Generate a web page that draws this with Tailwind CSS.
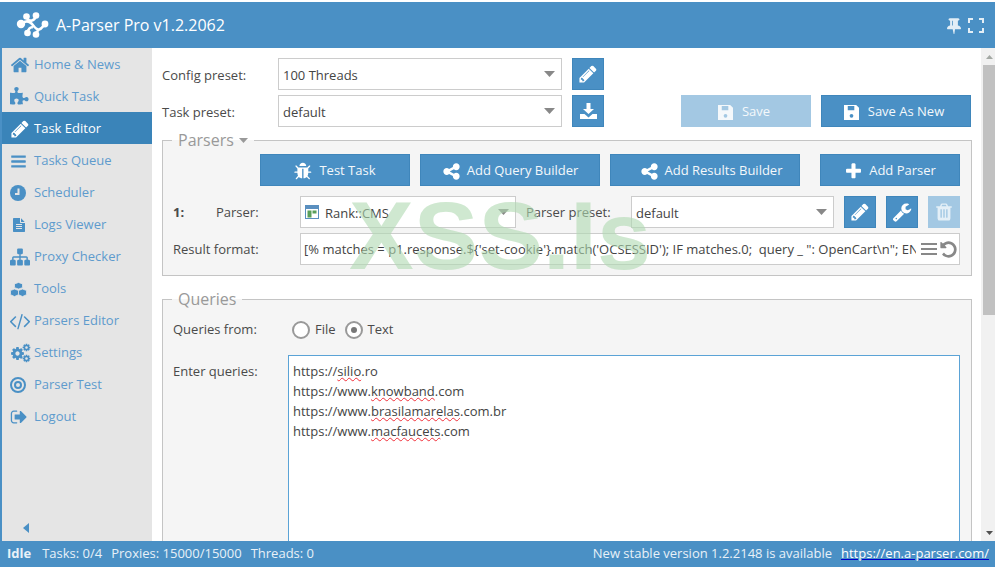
<!DOCTYPE html>
<html lang="en">
<head>
    <meta charset="UTF-8">
    <title>A-Parser Pro</title>
    <script src="https://cdn.jsdelivr.net/npm/@tailwindcss/browser@4"></script>
</head>
<body class="bg-white">
    <!-- shared icons -->
    <svg class="hidden">
        <symbol id="i-pencil" viewBox="0 0 1792 1792"><path d="M491 1536l91-91-235-235-91 91v107h128v128h107zm523-928q0-22-22-22-10 0-17 7l-542 542q-7 7-7 17 0 22 22 22 10 0 17-7l542-542q7-7 7-17zm-54-192l416 416-832 832h-416v-416zm683 96q0 53-37 90l-166 166-416-416 166-165q36-38 90-38 53 0 91 38l235 234q37 39 37 91z"/></symbol>
        <symbol id="i-share" viewBox="0 0 1792 1792"><path d="M1344 1024q133 0 226.5 93.5t93.5 226.5-93.5 226.5-226.5 93.5-226.5-93.5-93.5-226.5q0-12 2-34l-360-180q-92 86-218 86-133 0-226.5-93.5t-93.5-226.5 93.5-226.5 226.5-93.5q126 0 218 86l360-180q-2-22-2-34 0-133 93.5-226.5t226.5-93.5 226.5 93.5 93.5 226.5-93.5 226.5-226.5 93.5q-126 0-218-86l-360 180q2 22 2 34t-2 34l360 180q92-86 218-86z"/></symbol>
        <symbol id="i-save" viewBox="0 0 16 16"><path fill-rule="evenodd" d="M0 0h13l3 3v13H0zM4 1v4.500h7V1zM8 9.500a2 2 0 1 0 0 4 2 2 0 0 0 0-4z"/></symbol>
        <symbol id="i-cog" viewBox="0 0 1792 1792"><path d="M1152 896q0-106-75-181t-181-75-181 75-75 181 75 181 181 75 181-75 75-181zm512-109v222q0 12-8 23t-20 13l-185 28q-19 54-39 91 35 50 107 138 10 12 10 25t-9 23q-27 37-99 108t-94 71q-12 0-26-9l-138-108q-44 23-91 38-16 136-29 186-7 28-36 28h-222q-14 0-24.5-8.5t-11.5-21.5l-28-184q-49-16-90-37l-141 107q-10 9-25 9-14 0-25-11-126-114-165-168-7-10-7-23 0-12 8-23 15-21 51-66.5t54-70.5q-27-50-41-99l-183-27q-13-2-21-12.5t-8-23.5v-222q0-12 8-23t19-13l186-28q14-46 39-92-40-57-107-138-10-12-10-24 0-10 9-23 26-36 98.5-107.5t94.5-71.5q13 0 26 10l138 107q44-23 91-38 16-136 29-186 7-28 36-28h222q14 0 24.5 8.5t11.5 21.5l28 184q49 16 90 37l142-107q9-9 24-9 13 0 25 10 129 119 165 170 7 8 7 22 0 12-8 23-15 21-51 66.5t-54 70.5q26 50 41 98l183 28q13 2 21 12.5t8 23.5z"/></symbol>
    </svg>

    <div class="relative flex h-[567px] w-[995px] flex-col overflow-hidden pt-[2px] font-['Open_Sans',sans-serif] text-[13px] text-[#4a4a4a]">
        <!-- header -->
        <header class="flex h-[46px] shrink-0 items-center bg-[#4a90c5] pr-[11px] pl-[15px] text-white">
            <svg class="h-[26px] w-[34px]" viewBox="0 0 34 26" fill="#fff">
                <circle cx="11.500" cy="4.500" r="3.300"/><circle cx="21" cy="3.500" r="3.300"/><circle cx="6" cy="12" r="4.200"/><circle cx="30" cy="12" r="3.400"/><circle cx="12.500" cy="21" r="3.300"/><circle cx="21" cy="22.500" r="3.300"/>
                <path d="M6 12C11 8 14 9 16.500 11.500S21 18 24 17.500 28 14 30 12M11.500 4.500C12 8 15 9 17 8.500S20.500 6 21 3.500M12.500 21C13 17 15.500 14.500 18 15.500M21 22.500C21.500 19.500 23 18 24 17.500" fill="none" stroke="#fff" stroke-width="2.600"/>
            </svg>
            <span class="ml-[7px] text-[16px]">A-Parser Pro v1.2.2062</span>
            <svg class="ml-auto h-[17px] w-[14px]" viewBox="0 0 1152 1792" preserveAspectRatio="none" fill="#e3eef6"><path d="M480 864v-448q0-14-9-23t-23-9-23 9-9 23v448q0 14 9 23t23 9 23-9 9-23zm672 352q0 26-19 45t-45 19h-429l-51 483q-2 12-10.500 20.500t-20.500 8.500h-1q-27 0-32-27l-76-485h-404q-26 0-45-19t-19-45q0-123 78.500-221.500t177.500-98.500v-512q-52 0-90-38t-38-90 38-90 90-38h640q52 0 90 38t38 90-38 90-90 38v512q99 0 177.500 98.500t78.500 221.500z"/></svg>
            <svg class="ml-[7px] h-[15px] w-[16px]" viewBox="0 0 16 15" fill="none" stroke="#e3eef6" stroke-width="2"><path d="M1 5V1h4M11 1h4v4M15 10v4h-4M5 14H1v-4"/></svg>
        </header>

        <div class="flex min-h-0 flex-1">
            <!-- sidebar -->
            <nav class="flex w-[152px] shrink-0 flex-col border-l-2 border-[#4a90c5] bg-[#e5e5e5] text-[#5e9bcd]">
                <a class="flex h-8 items-center pt-[2px] pl-[8px]"><span class="flex w-[24px] justify-start"><svg class="h-[20px] w-[20px] fill-[#4a90c5]" viewBox="0 0 1792 1792"><path d="M1472 992v480q0 26-19 45t-45 19h-384v-384h-256v384h-384q-26 0-45-19t-19-45v-480q0-1 .5-3t.5-3l575-474 575 474q1 2 1 6zm223-69l-62 74q-8 9-21 11h-3q-13 0-21-7l-692-577-692 577q-12 8-24 7-13-2-21-11l-62-74q-8-10-7-23.500t11-21.500l719-599q32-26 76-26t76 26l244 204v-195q0-14 9-23t23-9h192q14 0 23 9t9 23v408l219 182q10 8 11 21.500t-7 23.500z"/></svg></span>Home &amp; News</a>
                <a class="flex h-8 items-center pt-[2px] pl-[8px]"><span class="flex w-[24px]"><svg class="h-[20px] w-[20px] fill-[#4a90c5]" viewBox="0 0 1792 1792"><path d="M1664 1098q0 81-44.500 135t-123.500 54q-41 0-77.500-17.500t-59-38-56.500-38-71-17.500q-110 0-110 124 0 39 16 115t15 115v5q-22 0-33 1-34 3-97.500 11.500t-115.500 13.500-98 5q-61 0-103-26.500t-42-83.500q0-37 17.500-71t38-56.500 38-59 17.500-77.500q0-79-54-123.500t-135-44.500q-84 0-143 45.500t-59 127.500q0 43 15 83t33.500 64.500 33.500 53 15 50.500q0 45-46 89-37 35-117 35-95 0-245-24-9-2-27.500-4t-27.500-4l-13-2q-1 0-3-1-2 0-2-1v-1024q2 1 17.500 3.500t34 5 21.500 3.500q150 24 245 24 80 0 117-35 46-44 46-89 0-22-15-50.500t-33.500-53-33.500-64.500-15-83q0-82 59-127.500t144-45.500q80 0 134 44.500t54 123.500q0 41-17.500 77.500t-38 59-38 56.500-17.500 71q0 57 42 83.500t103 26.500q64 0 180-15t163-17v2q-1 2-3.500 17.500t-5 34-3.500 21.500q-24 150-24 245 0 80 35 117 44 46 89 46 22 0 50.500-15t53-33.500 64.500-33.500 83-15q82 0 127.500 59t45.500 143z"/></svg></span>Quick Task</a>
                <a class="flex h-8 items-center bg-[#3a84b9] pt-[2px] pl-[8px] text-white"><span class="flex w-[24px]"><svg class="h-[20px] w-[20px] fill-white"><use href="#i-pencil"/></svg></span>Task Editor</a>
                <a class="flex h-8 items-center pt-[2px] pl-[8px]"><span class="flex w-[24px]"><svg class="h-[17px] w-[17px] fill-[#4a90c5]" viewBox="0 0 1792 1792"><path d="M1664 1344v128q0 26-19 45t-45 19h-1408q-26 0-45-19t-19-45v-128q0-26 19-45t45-19h1408q26 0 45 19t19 45zm0-512v128q0 26-19 45t-45 19h-1408q-26 0-45-19t-19-45v-128q0-26 19-45t45-19h1408q26 0 45 19t19 45zm0-512v128q0 26-19 45t-45 19h-1408q-26 0-45-19t-19-45v-128q0-26 19-45t45-19h1408q26 0 45 19t19 45z"/></svg></span>Tasks Queue</a>
                <a class="flex h-8 items-center pt-[2px] pl-[8px]"><span class="flex w-[24px]"><svg class="h-[16px] w-[16px]" viewBox="0 0 16 16"><circle cx="8" cy="8" r="8" fill="#4a90c5"/><path d="M8.500 3.500v5.500H5" fill="none" stroke="#e5e5e5" stroke-width="2"/></svg></span>Scheduler</a>
                <a class="flex h-8 items-center pt-[2px] pl-[8px]"><span class="flex w-[24px]"><svg class="ml-[2px] h-[16px] w-[13px] fill-[#4a90c5]" viewBox="0 0 1664 1792"><path d="M1596 476q14 14 28 36h-472v-472q22 14 36 28zm-476 164h544v1056q0 40-28 68t-68 28h-1344q-40 0-68-28t-28-68v-1600q0-40 28-68t68-28h800v544q0 40 28 68t68 28zm160 736v-64q0-14-9-23t-23-9h-704q-14 0-23 9t-9 23v64q0 14 9 23t23 9h704q14 0 23-9t9-23zm0-256v-64q0-14-9-23t-23-9h-704q-14 0-23 9t-9 23v64q0 14 9 23t23 9h704q14 0 23-9t9-23zm0-256v-64q0-14-9-23t-23-9h-704q-14 0-23 9t-9 23v64q0 14 9 23t23 9h704q14 0 23-9t9-23z"/></svg></span>Logs Viewer</a>
                <a class="flex h-8 items-center pt-[2px] pl-[8px]"><span class="flex w-[24px]"><svg class="h-[20px] w-[20px] fill-[#4a90c5]" viewBox="0 0 1792 1792"><path d="M1792 1248v320q0 40-28 68t-68 28h-320q-40 0-68-28t-28-68v-320q0-40 28-68t68-28h96v-192h-512v192h96q40 0 68 28t28 68v320q0 40-28 68t-68 28h-320q-40 0-68-28t-28-68v-320q0-40 28-68t68-28h96v-192h-512v192h96q40 0 68 28t28 68v320q0 40-28 68t-68 28h-320q-40 0-68-28t-28-68v-320q0-40 28-68t68-28h96v-192q0-52 38-90t90-38h512v-192h-96q-40 0-68-28t-28-68v-320q0-40 28-68t68-28h320q40 0 68 28t28 68v320q0 40-28 68t-68 28h-96v192h512q52 0 90 38t38 90v192h96q40 0 68 28t28 68z"/></svg></span>Proxy Checker</a>
                <a class="flex h-8 items-center pt-[2px] pl-[8px]"><span class="flex w-[24px]"><svg class="h-[15px] w-[17px]" viewBox="0 0 17 16" preserveAspectRatio="none" fill="#4a90c5" stroke="#e5e5e5" stroke-width=".8"><path d="M8.500 0.500l4 1.500v4l-4 1.500-4-1.500v-4z"/><path d="M4.500 7.500l4 1.500v4.500l-4 2-4-2v-4.500z"/><path d="M12.500 7.500l4 1.500v4.500l-4 2-4-2v-4.500z"/></svg></span>Tools</a>
                <a class="flex h-8 items-center pt-[2px] pl-[8px]"><span class="flex w-[24px]"><svg class="h-[20px] w-[20px] fill-[#4a90c5]" viewBox="0 0 1792 1792"><path d="M553 1399l-50 50q-10 10-23 10t-23-10l-466-466q-10-10-10-23t10-23l466-466q10-10 23-10t23 10l50 50q10 10 10 23t-10 23l-393 393 393 393q10 10 10 23t-10 23zm591-1067l-373 1291q-4 13-15.500 19.500t-23.500 2.500l-62-17q-13-4-19.500-15.500t-2.500-24.500l373-1291q4-13 15.500-19.500t23.500-2.500l62 17q13 4 19.500 15.500t2.500 24.500zm657 651l-466 466q-10 10-23 10t-23-10l-50-50q-10-10-10-23t10-23l393-393-393-393q-10-10-10-23t10-23l50-50q10-10 23-10t23 10l466 466q10 10 10 23t-10 23z"/></svg></span>Parsers Editor</a>
                <a class="flex h-8 items-center pt-[2px] pl-[8px]"><span class="relative flex h-[16px] w-[24px]"><svg class="h-[15px] w-[15px] translate-y-[1px] fill-[#4a90c5]"><use href="#i-cog"/></svg><svg class="absolute top-[-2px] left-[12px] h-[9px] w-[9px] fill-[#4a90c5]"><use href="#i-cog"/></svg><svg class="absolute top-[9px] left-[12px] h-[9px] w-[9px] fill-[#4a90c5]"><use href="#i-cog"/></svg></span>Settings</a>
                <a class="flex h-8 items-center pt-[2px] pl-[8px]"><span class="flex w-[24px]"><svg class="h-[16px] w-[16px]" viewBox="0 0 16 16" fill="none" stroke="#4a90c5"><circle cx="8" cy="8" r="7" stroke-width="2"/><circle cx="8" cy="8" r="3" stroke-width="2"/></svg></span>Parser Test</a>
                <a class="flex h-8 items-center pt-[2px] pl-[8px]"><span class="flex w-[24px]"><svg class="h-[18px] w-[17px] fill-[#4a90c5]" viewBox="0 0 1664 1792"><path d="M704 1440q0 4 1 20t.5 26.500-3 23.500-10 19.500-20.500 6.500h-320q-119 0-203.500-84.500t-84.500-203.500v-704q0-119 84.500-203.500t203.500-84.500h320q13 0 22.500 9.500t9.500 22.500q0 4 1 20t.5 26.500-3 23.500-10 19.500-20.500 6.500h-320q-66 0-113 47t-47 113v704q0 66 47 113t113 47h312l11.500 1 11.500 3 8 5.500 7 9 2 13.500zm928-544q0 26-19 45l-544 544q-19 19-45 19t-45-19-19-45v-288h-448q-26 0-45-19t-19-45v-384q0-26 19-45t45-19h448v-288q0-26 19-45t45-19 45 19l544 544q19 19 19 45z"/></svg></span>Logout</a>
                <div class="mt-auto mb-[8px] pl-[21px]"><svg class="h-[10px] w-[6px] fill-[#4a90c5]" viewBox="0 0 6 10"><path d="M6 0v10L0 5z"/></svg></div>
            </nav>

            <!-- main -->
            <main class="min-w-0 flex-1 overflow-hidden pt-[10px] pl-[10px]">
                <div class="flex">
                    <label class="flex h-8 w-[116px] items-center pt-[3px]">Config preset:</label>
                    <div class="flex h-8 w-[284px] items-center justify-between border border-[#ccc] bg-white pr-[6px] pl-[4px] text-[#444]"><span class="mt-[3px]">100 Threads</span><svg class="h-[6px] w-[11px] fill-[#888]" viewBox="0 0 11 6"><path d="M0 0h11L5.500 6z"/></svg></div>
                    <button class="ml-[10px] flex h-8 w-8 items-center justify-center border border-[#3f86bb] bg-[#4a90c5]"><svg class="h-[20px] w-[20px] fill-white"><use href="#i-pencil"/></svg></button>
                </div>
                <div class="mt-[5px] flex">
                    <label class="flex h-8 w-[116px] items-center pt-[3px]">Task preset:</label>
                    <div class="flex h-8 w-[284px] items-center justify-between border border-[#ccc] bg-white pr-[6px] pl-[4px] text-[#444]"><span class="mt-[3px]">default</span><svg class="h-[6px] w-[11px] fill-[#888]" viewBox="0 0 11 6"><path d="M0 0h11L5.500 6z"/></svg></div>
                    <button class="ml-[10px] flex h-8 w-8 items-center justify-center border border-[#3f86bb] bg-[#4a90c5]"><svg class="h-[16px] w-[17px] fill-white" viewBox="0 0 17 16"><path d="M6.500 0h4v6H14L8.500 11 3 6h3.500zM0 11h4.500l4 3.500 4-3.500H17v5H0z"/></svg></button>
                    <button class="ml-[77px] flex h-8 w-[130px] items-center justify-center gap-[9px] bg-[#a3c8e3] pt-[2px] pr-[4px] text-[#f4f8fb]"><svg class="h-[15px] w-[15px] fill-[#f4f8fb]"><use href="#i-save"/></svg>Save</button>
                    <button class="ml-[10px] flex h-8 w-[150px] items-center justify-center gap-[9px] border border-[#3f86bb] bg-[#4a90c5] pt-[2px] pr-[4px] text-[#f4f8fb]"><svg class="h-[15px] w-[15px] fill-white"><use href="#i-save"/></svg>Save As New</button>
                </div>

                <fieldset class="mt-[1px] w-[810px] border border-[#c4c4c4] bg-[#f5f5f5] pr-[10px] pb-[10px] pl-[10px]">
                    <legend class="ml-[-1px] flex h-[24px] items-center gap-[5px] px-[6px] text-[16px] leading-[24px] text-[#999]">Parsers<svg class="h-[5px] w-[9px] fill-[#999]" viewBox="0 0 9 5"><path d="M0 0h9L4.500 5z"/></svg></legend>
                    <div class="mt-[2px] flex gap-[10px] pl-[87px]">
                        <button class="flex h-8 w-[150px] items-center justify-center gap-[6px] border border-[#3f86bb] bg-[#4a90c5] pt-[2px] text-[#f4f8fb]"><svg class="h-[19px] w-[19px] fill-white" viewBox="0 0 1792 1792"><path d="M1632 960q0 26-19 45t-45 19h-224q0 171-67 290l208 209q19 19 19 45t-19 45q-18 19-45 19t-45-19l-198-197q-5 5-15 13t-42 28.500-65 36.500-82 29-97 13v-896h-128v896q-51 0-101.500-13.500t-87-33-66-39-43.500-32.500l-15-14-183 207q-20 21-48 21-24 0-43-16-19-18-20.500-44.500t15.500-46.500l202-227q-58-114-58-274h-224q-26 0-45-19t-19-45 19-45 45-19h224v-294l-173-173q-19-19-19-45t19-45 45-19 45 19l173 173h844l173-173q19-19 45-19t45 19 19 45-19 45l-173 173v294h224q26 0 45 19t19 45zm-480-576h-640q0-133 93.500-226.500t226.500-93.500 226.500 93.500 93.500 226.500z"/></svg>Test Task</button>
                        <button class="flex h-8 w-[180px] items-center justify-center gap-[6px] border border-[#3f86bb] bg-[#4a90c5] pt-[2px] text-[#f4f8fb]"><svg class="h-[19px] w-[19px] fill-white"><use href="#i-share"/></svg>Add Query Builder</button>
                        <button class="flex h-8 w-[190px] items-center justify-center gap-[6px] border border-[#3f86bb] bg-[#4a90c5] pt-[2px] pl-[12px] text-[#f4f8fb]"><svg class="h-[19px] w-[19px] fill-white"><use href="#i-share"/></svg>Add Results Builder</button>
                        <button class="ml-[10px] flex h-8 w-[140px] items-center justify-center gap-[6px] border border-[#3f86bb] bg-[#4a90c5] pt-[2px] text-[#f4f8fb]"><svg class="h-[19px] w-[19px] fill-white" viewBox="0 0 1792 1792"><path d="M1600 736v192q0 40-28 68t-68 28h-416v416q0 40-28 68t-68 28h-192q-40 0-68-28t-28-68v-416h-416q-40 0-68-28t-28-68v-192q0-40 28-68t68-28h416v-416q0-40 28-68t68-28h192q40 0 68 28t28 68v416h416q40 0 68 28t28 68z"/></svg>Add Parser</button>
                    </div>
                    <div class="mt-[10px] flex">
                        <span class="flex h-8 w-[43px] items-center pt-[2px] font-bold">1:</span>
                        <label class="flex h-8 w-[84px] items-center pt-[2px]">Parser:</label>
                        <div class="flex h-8 w-[216px] items-center border border-[#ccc] bg-white pr-[6px] pl-[4px] text-[#444]">
                            <svg class="mr-[6px] h-[14px] w-[14px]" viewBox="0 0 14 14"><rect x=".5" y=".5" width="13" height="13" fill="#fff" stroke="#5a8fbf"/><rect x="1" y="1" width="12" height="3" fill="#5a8fbf"/><rect x="2.500" y="5.500" width="4" height="7" fill="#5a9f5a"/><rect x="7.500" y="5.500" width="4" height="3" fill="#5a9f5a"/></svg>
                            <span class="mt-[3px]">Rank::CMS</span>
                            <svg class="ml-auto h-[6px] w-[11px] fill-[#888]" viewBox="0 0 11 6"><path d="M0 0h11L5.500 6z"/></svg>
                        </div>
                        <label class="flex h-8 w-[115px] items-center pt-[2px] pl-[10px]">Parser preset:</label>
                        <div class="flex h-8 w-[203px] items-center justify-between border border-[#ccc] bg-white pr-[6px] pl-[4px] text-[#444]"><span class="mt-[3px]">default</span><svg class="h-[6px] w-[11px] fill-[#888]" viewBox="0 0 11 6"><path d="M0 0h11L5.500 6z"/></svg></div>
                        <button class="ml-[10px] flex h-8 w-8 items-center justify-center border border-[#3f86bb] bg-[#4a90c5]"><svg class="h-[20px] w-[20px] fill-white"><use href="#i-pencil"/></svg></button>
                        <button class="ml-[10px] flex h-8 w-8 items-center justify-center border border-[#3f86bb] bg-[#4a90c5]"><svg class="h-[20px] w-[20px] fill-white" viewBox="0 0 1792 1792"><path d="M448 1472q0-26-19-45t-45-19-45 19-19 45 19 45 45 19 45-19 19-45zm644-420l-682 682q-37 37-90 37-52 0-91-37l-106-108q-38-36-38-90 0-53 38-91l681-681q39 98 114.500 173.500t173.500 114.500zm634-435q0 39-23 106-47 134-164.500 217.500t-258.500 83.500q-185 0-316.500-131.500t-131.500-316.500 131.500-316.500 316.500-131.500q58 0 121.500 16.500t107.500 46.500q16 11 16 28t-16 28l-293 169v224l193 107q5-3 79-48.500t135.500-81 70.500-35.500q15 0 23.500 10t8.500 25z"/></svg></button>
                        <button class="ml-[10px] flex h-8 w-8 items-center justify-center bg-[#a3c8e3]"><svg class="h-[20px] w-[20px] fill-[#e4eff7]" viewBox="0 0 1792 1792"><path d="M704 1376v-704q0-14-9-23t-23-9h-64q-14 0-23 9t-9 23v704q0 14 9 23t23 9h64q14 0 23-9t9-23zm256 0v-704q0-14-9-23t-23-9h-64q-14 0-23 9t-9 23v704q0 14 9 23t23 9h64q14 0 23-9t9-23zm256 0v-704q0-14-9-23t-23-9h-64q-14 0-23 9t-9 23v704q0 14 9 23t23 9h64q14 0 23-9t9-23zm-544-992h448l-48-117q-7-9-17-11h-317q-10 2-17 11zm928 32v64q0 14-9 23t-23 9h-96v948q0 83-47 143.500t-113 60.500h-832q-66 0-113-58.500t-47-141.500v-952h-96q-14 0-23-9t-9-23v-64q0-14 9-23t23-9h309l70-167q15-37 54-63t79-26h320q40 0 79 26t54 63l70 167h309q14 0 23 9t9 23z"/></svg></button>
                    </div>
                    <div class="mt-[5px] flex">
                        <label class="flex h-8 w-[127px] items-center pt-[2px]">Result format:</label>
                        <div class="flex h-8 w-[660px] items-center border border-[#ccc] bg-white pr-[1px] pl-[3px] text-[#444]">
                            <span class="mt-[2px] min-w-0 flex-1 overflow-hidden whitespace-pre">[% matches = p1.response.${'set-cookie'}.match('OCSESSID'); IF matches.0;  query _ ": OpenCart\n"; END %]</span>
                            <svg class="ml-[5px] h-[16px] w-[16px] shrink-0 fill-[#888]" viewBox="0 0 16 16"><path d="M0 2h16v2H0zM0 7h16v2H0zM0 12h16v2H0z"/></svg>
                            <svg class="ml-[2px] h-[19px] w-[19px] shrink-0 fill-[#888]" viewBox="0 0 1792 1792"><path d="M1664 896q0 156-61 298t-164 245-245 164-298 61q-172 0-327-72.500t-264-204.500q-7-10-6.500-22.500t8.500-20.500l137-138q10-9 25-9 16 2 23 12 73 95 179 147t225 52q104 0 198.500-40.500t163.500-109.500 109.500-163.500 40.500-198.500-40.500-198.500-109.500-163.500-163.500-109.500-198.500-40.500q-98 0-188 35.500t-160 101.500l137 138q31 30 14 69-17 40-59 40h-448q-26 0-45-19t-19-45v-448q0-42 40-59 39-17 69 14l130 129q107-101 244.500-156.500t284.500-55.500q156 0 298 61t245 164 164 245 61 298z"/></svg>
                        </div>
                    </div>
                </fieldset>

                <fieldset class="mt-[11px] w-[810px] border border-[#c4c4c4] bg-[#f5f5f5] pr-[10px] pl-[10px]">
                    <legend class="ml-[-1px] h-[24px] px-[6px] text-[16px] leading-[24px] text-[#999]">Queries</legend>
                    <div class="mt-[2px] flex h-8 items-center pt-[1px]">
                        <label class="w-[119px] pt-[1px]">Queries from:</label>
                        <span class="h-[18px] w-[18px] rounded-full border-2 border-[#999] bg-white"></span>
                        <span class="ml-[5px] pt-[1px]">File</span>
                        <span class="ml-[9px] flex h-[18px] w-[18px] items-center justify-center rounded-full border-2 border-[#999] bg-white"><span class="h-[6px] w-[6px] rounded-full bg-[#777]"></span></span>
                        <span class="ml-[5px] pt-[1px]">Text</span>
                    </div>
                    <div class="mt-[10px] flex">
                        <label class="w-[115px] pt-[7px]">Enter queries:</label>
                        <div class="h-[300px] w-[672px] border border-[#5ba3d6] bg-white pt-[5px] pl-[4px] leading-[20px] text-[#444]">
                            <div>https://<span class="underline decoration-[#f0303a] decoration-wavy decoration-1">silio</span>.ro</div>
                            <div>https://www.<span class="underline decoration-[#f0303a] decoration-wavy decoration-1">knowband</span>.com</div>
                            <div>https://www.<span class="underline decoration-[#f0303a] decoration-wavy decoration-1">brasilamarelas</span>.com.br</div>
                            <div>https://www.<span class="underline decoration-[#f0303a] decoration-wavy decoration-1">macfaucets</span>.com</div>
                        </div>
                    </div>
                </fieldset>
            </main>

            <!-- scrollbar -->
            <div class="flex w-[14px] shrink-0 flex-col items-stretch bg-[#f1f1f1] pl-[2px]">
                <div class="flex h-[17px] items-center justify-center"><svg class="h-[4px] w-[7px] fill-[#a3a8a3]" viewBox="0 0 7 4"><path d="M3.500 0L7 4H0z"/></svg></div>
                <div class="h-[250px] bg-[#c1c1c1]"></div>
                <div class="mt-auto flex h-[17px] items-center justify-center"><svg class="h-[4px] w-[7px] fill-[#505050]" viewBox="0 0 7 4"><path d="M0 0h7L3.500 4z"/></svg></div>
            </div>
        </div>

        <!-- status bar -->
        <footer class="flex h-[26px] shrink-0 items-center bg-[#4a90c5] pr-[6px] pl-[7px] text-[#e8f1f8]">
            <b class="font-bold">Idle</b>
            <span class="ml-[11px]">Tasks: 0/4</span>
            <span class="ml-[9px]">Proxies: 15000/15000</span>
            <span class="ml-[9px]">Threads: 0</span>
            <span class="ml-auto">New stable version 1.2.2148 is available</span>
            <a class="ml-[9px] text-white underline decoration-[#0000cc]">https://en.a-parser.com/</a>
        </footer>

        <!-- watermark -->
        <div class="pointer-events-none absolute top-[186px] left-[349px] font-['Liberation_Sans',sans-serif] text-[97px] leading-[100px] font-bold whitespace-nowrap text-[#afd9b1]/60">XSS.Is</div>
    </div>
</body>
</html>
